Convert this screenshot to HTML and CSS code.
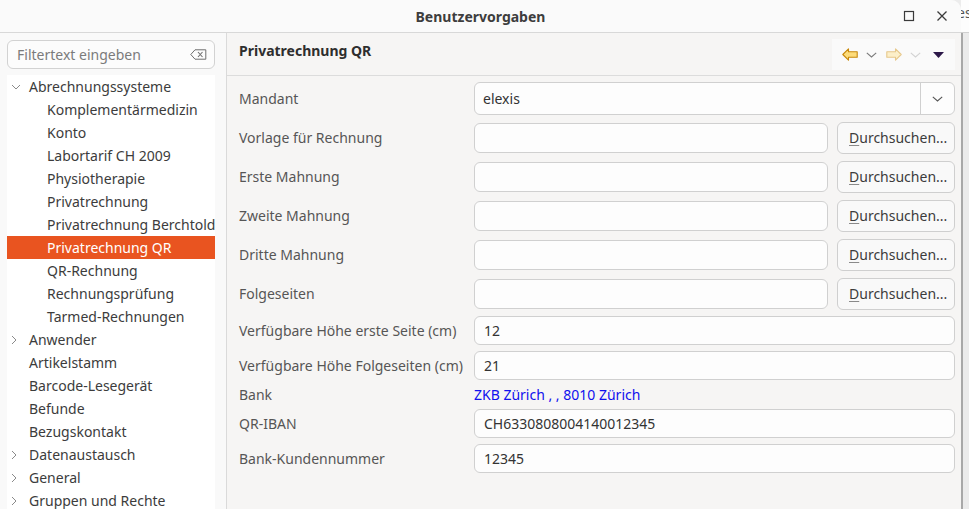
FILE: index.html
```html
<!DOCTYPE html>
<html lang="de">
<head>
<meta charset="utf-8">
<title>Benutzervorgaben</title>
<link rel="stylesheet" href="styles.css">
</head>
<body>
<div class="screen">
  <div class="window">
    <header class="titlebar">
      <div></div>
      <div class="title">Benutzervorgaben</div>
      <div class="wincontrols">
        <svg class="wbtn" width="12" height="12" viewBox="0 0 12 12"><rect x="1.5" y="1.5" width="9" height="9" fill="none" stroke="#3a3a3a" stroke-width="1.2"/></svg>
        <svg class="wbtn" width="12" height="12" viewBox="0 0 12 12"><path d="M1.5 1.5 L10.5 10.5 M10.5 1.5 L1.5 10.5" stroke="#3a3a3a" stroke-width="1.3" fill="none"/></svg>
      </div>
    </header>
    <div class="main">
      <aside class="sidebar">
        <div class="filter">
          <span class="placeholder">Filtertext eingeben</span>
          <svg class="clear" width="17" height="11" viewBox="0 0 17 11"><path d="M5 0.8 H15.8 V10.2 H5 L0.8 5.5 Z" fill="none" stroke="#6e6e6e" stroke-width="1"/><path d="M8 3 L12.5 8 M12.5 3 L8 8" stroke="#6e6e6e" stroke-width="1.1"/></svg>
        </div>
        <ul class="tree">
          <li class="row"><span class="twisty"><svg width="10" height="6" viewBox="0 0 10 6"><path d="M1 1 L5 5 L9 1" fill="none" stroke="#8a8a8a" stroke-width="1"/></svg></span>Abrechnungssysteme</li>
          <li class="row sub"><span class="twisty"></span>Komplementärmedizin</li>
          <li class="row sub"><span class="twisty"></span>Konto</li>
          <li class="row sub"><span class="twisty"></span>Labortarif CH 2009</li>
          <li class="row sub"><span class="twisty"></span>Physiotherapie</li>
          <li class="row sub"><span class="twisty"></span>Privatrechnung</li>
          <li class="row sub"><span class="twisty"></span>Privatrechnung Berchtold</li>
          <li class="row sub selected"><span class="twisty"></span>Privatrechnung QR</li>
          <li class="row sub"><span class="twisty"></span>QR-Rechnung</li>
          <li class="row sub"><span class="twisty"></span>Rechnungsprüfung</li>
          <li class="row sub"><span class="twisty"></span>Tarmed-Rechnungen</li>
          <li class="row"><span class="twisty"><svg width="6" height="10" viewBox="0 0 6 10"><path d="M1 1 L5 5 L1 9" fill="none" stroke="#8a8a8a" stroke-width="1"/></svg></span>Anwender</li>
          <li class="row"><span class="twisty"></span>Artikelstamm</li>
          <li class="row"><span class="twisty"></span>Barcode-Lesegerät</li>
          <li class="row"><span class="twisty"></span>Befunde</li>
          <li class="row"><span class="twisty"></span>Bezugskontakt</li>
          <li class="row"><span class="twisty"><svg width="6" height="10" viewBox="0 0 6 10"><path d="M1 1 L5 5 L1 9" fill="none" stroke="#8a8a8a" stroke-width="1"/></svg></span>Datenaustausch</li>
          <li class="row"><span class="twisty"><svg width="6" height="10" viewBox="0 0 6 10"><path d="M1 1 L5 5 L1 9" fill="none" stroke="#8a8a8a" stroke-width="1"/></svg></span>General</li>
          <li class="row"><span class="twisty"><svg width="6" height="10" viewBox="0 0 6 10"><path d="M1 1 L5 5 L1 9" fill="none" stroke="#8a8a8a" stroke-width="1"/></svg></span>Gruppen und Rechte</li>
        </ul>
      </aside>
      <section class="content">
        <div class="pagehead">
          <h1 class="pagetitle">Privatrechnung QR</h1>
          <div class="toolbar">
            <svg class="tool" width="16" height="13" viewBox="0 0 16 13"><path d="M0.8 6.5 L6.5 0.8 V3.8 H15.2 V9.2 H6.5 V12.2 Z" fill="#fddc7a" stroke="#c7880c" stroke-width="1.1" stroke-linejoin="round"/></svg>
            <svg class="tool chev" width="11" height="6" viewBox="0 0 11 6"><path d="M0.8 0.8 L5.5 5 L10.2 0.8" fill="none" stroke="#7a7a7a" stroke-width="1.1"/></svg>
            <svg class="tool" width="16" height="13" viewBox="0 0 16 13"><path d="M15.2 6.5 L9.5 0.8 V3.8 H0.8 V9.2 H9.5 V12.2 Z" fill="#fcefc9" stroke="#e6c88c" stroke-width="1.1" stroke-linejoin="round"/></svg>
            <svg class="tool chev" width="11" height="6" viewBox="0 0 11 6"><path d="M0.8 0.8 L5.5 5 L10.2 0.8" fill="none" stroke="#d2d2d2" stroke-width="1.1"/></svg>
            <svg class="tool tri" width="11" height="6" viewBox="0 0 11 6"><path d="M0 0 H11 L5.5 6 Z" fill="#2c1848"/></svg>
          </div>
        </div>
        <div class="form">
          <label class="lbl">Mandant</label>
          <div class="combo"><span class="combotext">elexis</span><span class="combobtn"><svg width="11" height="6" viewBox="0 0 11 6"><path d="M0.8 0.8 L5.5 5 L10.2 0.8" fill="none" stroke="#555" stroke-width="1.1"/></svg></span></div>

          <label class="lbl">Vorlage für Rechnung</label>
          <div class="browse"><div class="input"></div><button class="btn"><u>D</u>urchsuchen...</button></div>

          <label class="lbl">Erste Mahnung</label>
          <div class="browse"><div class="input"></div><button class="btn"><u>D</u>urchsuchen...</button></div>

          <label class="lbl">Zweite Mahnung</label>
          <div class="browse"><div class="input"></div><button class="btn"><u>D</u>urchsuchen...</button></div>

          <label class="lbl">Dritte Mahnung</label>
          <div class="browse"><div class="input"></div><button class="btn"><u>D</u>urchsuchen...</button></div>

          <label class="lbl">Folgeseiten</label>
          <div class="browse"><div class="input"></div><button class="btn"><u>D</u>urchsuchen...</button></div>

          <label class="lbl">Verfügbare Höhe erste Seite (cm)</label>
          <div class="input full">12</div>

          <label class="lbl">Verfügbare Höhe Folgeseiten (cm)</label>
          <div class="input full">21</div>

          <label class="lbl">Bank</label>
          <a class="link">ZKB Zürich , , 8010 Zürich</a>

          <label class="lbl">QR-IBAN</label>
          <div class="input full">CH6330808004140012345</div>

          <label class="lbl">Bank-Kundennummer</label>
          <div class="input full">12345</div>
        </div>
      </section>
    </div>
  </div>
  <div class="outside">
    <div class="outtop">es</div>
    <div class="outrest"></div>
  </div>
</div>
</body>
</html>
```
FILE: styles.css
```css
* { box-sizing: border-box; }
html, body { margin: 0; padding: 0; }
body {
  width: 969px;
  height: 509px;
  overflow: hidden;
  font-family: "Noto Sans", "Liberation Sans", sans-serif;
  font-size: 14px;
  color: #3c3c3c;
  background: #ececec;
}
.screen { display: flex; width: 969px; height: 509px; }
.window {
  width: 961px;
  height: 509px;
  display: flex;
  flex-direction: column;
  background: #f6f5f4;
  border-top-right-radius: 10px;
  overflow: hidden;
}
.titlebar {
  height: 33px;
  flex: none;
  display: grid;
  grid-template-columns: 1fr auto 1fr;
  align-items: center;
  background: #fafafa;
  border-bottom: 1px solid #d8d8d8;
}
.title { font-weight: 700; color: #3d3d3d; font-size: 14px; padding-left: 0; }
.wincontrols { display: flex; justify-content: flex-end; align-items: center; gap: 21px; padding-right: 13px; }
.wbtn { display: block; }

.main { flex: 1; display: flex; min-height: 0; }
.sidebar {
  width: 227px;
  flex: none;
  background: #f9f9f9;
  border-right: 1px solid #dadada;
  padding: 7px 11px 0 7px;
  display: flex;
  flex-direction: column;
  gap: 6px;
}
.filter {
  height: 29px;
  flex: none;
  border: 1px solid #d2d2d2;
  border-radius: 6px;
  background: #fcfcfc;
  display: flex;
  align-items: center;
  justify-content: space-between;
  padding: 0 7px 0 9px;
}
.placeholder { color: #7b7b7b; }
.clear { display: block; }
.tree {
  list-style: none;
  margin: 0;
  padding: 0;
  background: #ffffff;
  flex: 1;
  overflow: hidden;
}
.row {
  height: 23px;
  display: flex;
  align-items: center;
  white-space: nowrap;
  color: #3c3c3c;
}
.row.sub { padding-left: 18px; }
.row.selected { background: #e95420; color: #ffffff; }
.twisty { width: 22px; flex: none; display: flex; align-items: center; padding-left: 4px; }
.twisty svg { display: block; }

.content { flex: 1; display: flex; flex-direction: column; background: #f6f5f4; min-width: 0; }
.pagehead {
  height: 43px;
  flex: none;
  border-bottom: 1px solid #dcdcdc;
  display: flex;
  align-items: center;
  justify-content: space-between;
  padding: 0 6px 0 12px;
}
.pagetitle { margin: 0; font-size: 14px; font-weight: 700; color: #2e2e2e; padding-bottom: 8px; }
.toolbar {
  width: 123px;
  height: 31px;
  background: #fafafa;
  display: flex;
  align-items: center;
  padding-left: 10px;
  margin-top: 1px;
}
.tool { display: block; flex: none; }
.tool.chev { margin-left: 8px; }
.toolbar .tool:nth-child(3) { margin-left: 9px; }
.toolbar .tool:nth-child(4) { margin-left: 8px; }
.tool.tri { margin-left: 12px; }

.form {
  display: grid;
  grid-template-columns: 235px 1fr;
  grid-template-rows: repeat(6, 33px) 29px 29px 17px 29px 29px;
  row-gap: 6px;
  align-items: center;
  padding: 6px 6px 0 12px;
}
.lbl { color: #565656; white-space: nowrap; line-height: 16px; }
.combo {
  height: 33px;
  display: flex;
  border: 1px solid #d0d0d0;
  border-radius: 6px;
  background: #fdfdfd;
}
.combotext { flex: 1; display: flex; align-items: center; padding-left: 8px; color: #333; }
.combobtn { width: 34px; border-left: 1px solid #d0d0d0; display: flex; align-items: center; justify-content: center; }
.combobtn svg { display: block; }
.browse { display: flex; align-items: center; gap: 9px; }
.input {
  height: 30px;
  border: 1px solid #d0d0d0;
  border-radius: 6px;
  background: #fdfdfd;
  flex: 1;
  display: flex;
  align-items: center;
  padding-left: 9px;
  color: #333;
}
.input.full { height: 29px; }
.btn {
  width: 118px;
  height: 32px;
  flex: none;
  border: 1px solid #cfcfcf;
  border-radius: 6px;
  background: #f9f9f9;
  font-family: inherit;
  font-size: 14px;
  color: #3c3c3c;
  text-align: left;
  padding: 0 0 0 11px;
}
.btn u { text-decoration-color: #8a8a8a; text-underline-offset: 2px; }
.link { color: #1010ee; white-space: nowrap; line-height: 16px; }

.outside { width: 8px; flex: none; display: flex; flex-direction: column; overflow: hidden; }
.outtop { height: 33px; background: #fdfdfd; border-bottom: 1px solid #d0d0d0; color: #555; font-size: 14px; padding-top: 3px; margin-left: -4px; white-space: nowrap; }
.outrest { flex: 1; background: #ebebeb; border-left: 2px solid #a8a8a8; }
```
